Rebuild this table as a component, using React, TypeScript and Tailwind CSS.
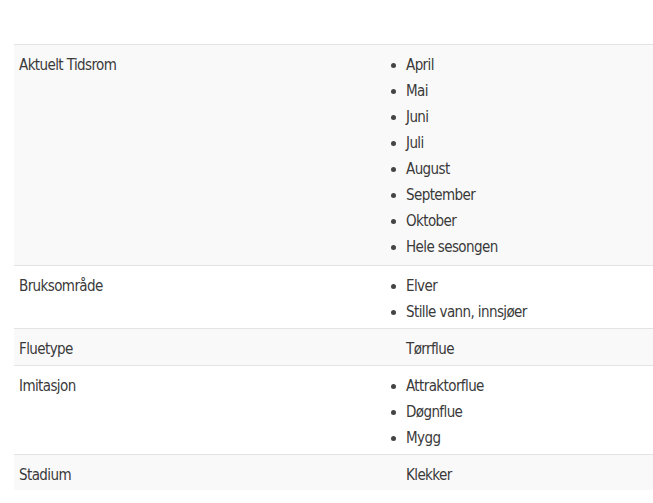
import React from 'react';

type Row = {
  label: string;
  values: string[];
  list: boolean;
  shaded: boolean;
  pb: string;
};

const rows: Row[] = [
  {
    label: 'Aktuelt Tidsrom',
    values: ['April', 'Mai', 'Juni', 'Juli', 'August', 'September', 'Oktober', 'Hele sesongen'],
    list: true,
    shaded: true,
    pb: 'pb-[5px]',
  },
  { label: 'Bruksområde', values: ['Elver', 'Stille vann, innsjøer'], list: true, shaded: false, pb: 'pb-[3px]' },
  { label: 'Fluetype', values: ['Tørrflue'], list: false, shaded: true, pb: 'pb-[3px]' },
  { label: 'Imitasjon', values: ['Attraktorflue', 'Døgnflue', 'Mygg'], list: true, shaded: false, pb: 'pb-[3px]' },
  { label: 'Stadium', values: ['Klekker'], list: false, shaded: true, pb: 'pb-[2px]' },
];

export default function App() {
  return (
    <div className="min-h-[503px] w-full bg-white pt-[44px] pl-[14px] overflow-hidden">
      <div
        className="w-[639px] text-[15px] leading-[26px] tracking-[-0.6px] text-[#3a3a3a]"
        style={{ fontFamily: '"Liberation Sans Narrow", "DejaVu Sans Condensed", "Liberation Sans", sans-serif' }}
      >
        {rows.map((row) => (
          <div
            key={row.label}
            className={`grid grid-cols-[387px_1fr] border-t border-[#e3e3e3] pt-[7px] ${row.pb} ${
              row.shaded ? 'bg-[#f9f9f9]' : 'bg-white'
            }`}
          >
            <div className="pl-[5px]">{row.label}</div>
            <div className="pl-[5px]">
              {row.list ? (
                <ul>
                  {row.values.map((v) => (
                    <li
                      key={v}
                      className="relative before:absolute before:left-[-15px] before:top-[11px] before:h-[5px] before:w-[5px] before:rounded-full before:bg-[#444] before:content-['']"
                    >
                      {v}
                    </li>
                  ))}
                </ul>
              ) : (
                <span>{row.values[0]}</span>
              )}
            </div>
          </div>
        ))}
      </div>
    </div>
  );
}
